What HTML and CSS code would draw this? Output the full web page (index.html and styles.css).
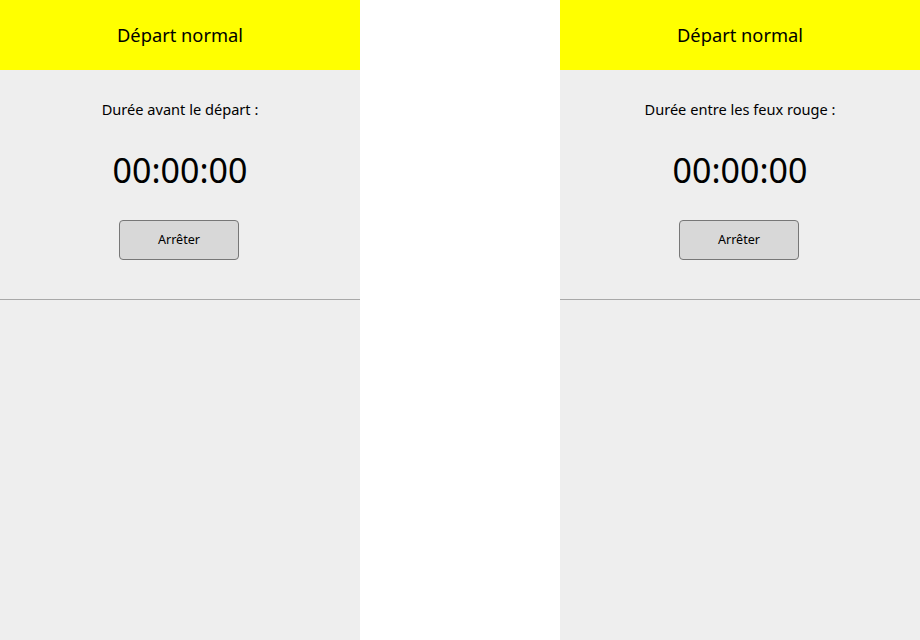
FILE: index.html
```html
<!DOCTYPE html>
<html lang="fr">
<head>
<meta charset="utf-8">
<link rel="stylesheet" href="styles.css">
</head>
<body>
<div class="screen">
  <section class="panel">
    <header class="title">Départ normal</header>
    <div class="body">
      <p class="label">Durée avant le départ :</p>
      <p class="timer">00:00:00</p>
      <button class="btn">Arrêter</button>
    </div>
  </section>
  <div class="spacer"></div>
  <section class="panel">
    <header class="title">Départ normal</header>
    <div class="body">
      <p class="label">Durée entre les feux rouge :</p>
      <p class="timer">00:00:00</p>
      <button class="btn">Arrêter</button>
    </div>
  </section>
</div>
</body>
</html>
```
FILE: styles.css
```css
* { box-sizing: border-box; }
html, body { margin: 0; padding: 0; background: #fff; }
body { font-family: "Noto Sans", "Open Sans", sans-serif; color: #000; }
.screen { display: flex; width: 920px; height: 640px; }
.panel { width: 360px; height: 640px; background: #eeeeee; display: flex; flex-direction: column; }
.spacer { width: 200px; background: #fff; }
.title { height: 70px; background: #ffff00; display: flex; align-items: center; justify-content: center; font-size: 18.3px; padding-bottom: 1px; }
.body { display: flex; flex-direction: column; align-items: center; padding-top: 29px; height: 230px; border-bottom: 1px solid #a8a8a8; }
.label { margin: 0; font-size: 14.6px; line-height: 20px; }
.timer { margin: 31px 0 0; font-size: 34px; line-height: 40px; }
.btn { margin: 30px 2px 0 0; width: 120px; height: 40px; background: #d8d8d8; border: 1px solid #777; border-radius: 4px; font-family: inherit; font-size: 12.6px; color: #000; padding: 0 0 2px; }
```
